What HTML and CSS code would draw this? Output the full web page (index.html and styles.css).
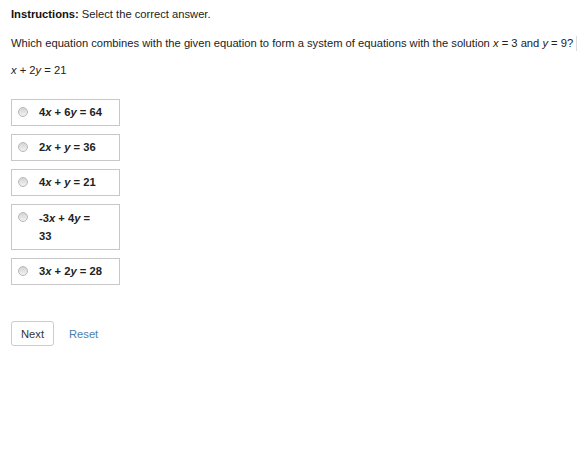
FILE: index.html
```html
<!DOCTYPE html>
<html>
<head>
<meta charset="utf-8">
<link rel="stylesheet" href="styles.css">
</head>
<body>
<div class="page">
  <p class="instructions"><b>Instructions:</b> Select the correct answer.</p>
  <p class="question">Which equation combines with the given equation to form a system of equations with the solution <i>x</i> = 3 and <i>y</i> = 9?<span class="caret"></span></p>
  <p class="given"><i>x</i> + 2<i>y</i> = 21</p>
  <div class="options">
    <label class="option"><span class="radio"></span><span class="eq">4<i>x</i> + 6<i>y</i> = 64</span></label>
    <label class="option"><span class="radio"></span><span class="eq">2<i>x</i> + <i>y</i> = 36</span></label>
    <label class="option"><span class="radio"></span><span class="eq">4<i>x</i> + <i>y</i> = 21</span></label>
    <label class="option tall"><span class="radio"></span><span class="eq">-3<i>x</i> + 4<i>y</i> =<br>33</span></label>
    <label class="option"><span class="radio"></span><span class="eq">3<i>x</i> + 2<i>y</i> = 28</span></label>
  </div>
  <div class="actions">
    <button class="btn-next">Next</button>
    <a class="btn-reset">Reset</a>
  </div>
</div>
</body>
</html>
```
FILE: styles.css
```css
html, body {
  margin: 0;
  padding: 0;
  background: #ffffff;
}
body {
  font-family: "Liberation Sans", Arial, sans-serif;
  font-size: 11.2px;
  color: #222222;
}
.page {
  padding: 7px 11px 0 11px;
}
p {
  margin: 0;
  line-height: 15px;
  white-space: nowrap;
}
.instructions {
  margin-bottom: 14px;
}
.instructions b {
  color: #111;
}
.question {
  margin-bottom: 12px;
}
.caret {
  display: inline-block;
  width: 1px;
  height: 15px;
  background: #dcdcdc;
  vertical-align: top;
  margin-left: 3px;
}
.given {
  margin-bottom: 21px;
}
.options {
  display: flex;
  flex-direction: column;
  gap: 8px;
  align-items: flex-start;
}
.option {
  display: flex;
  align-items: flex-start;
  box-sizing: border-box;
  width: 109px;
  height: 27px;
  border: 1px solid #c8c8c8;
  padding: 5px 6px 0 6px;
  white-space: nowrap;
}
.option.tall {
  height: 46px;
}
.radio {
  flex: none;
  box-sizing: border-box;
  width: 10px;
  height: 10px;
  border-radius: 50%;
  border: 1px solid #b8b8b8;
  background: linear-gradient(#d4d4d4, #f2f2f2);
  margin-top: 2px;
  margin-right: 11px;
}
.eq {
  font-weight: bold;
  line-height: 15px;
  color: #222;
}
.tall .eq {
  line-height: 18px;
  margin-top: -1px;
}
.actions {
  display: flex;
  align-items: center;
  gap: 15px;
  margin-top: 36px;
}
.btn-next {
  font-family: "Liberation Sans", Arial, sans-serif;
  font-size: 11.2px;
  color: #333;
  background: #fff;
  border: 1px solid #cccccc;
  border-radius: 3px;
  padding: 0;
  width: 43px;
  height: 25px;
}
.btn-reset {
  color: #4a7fae;
  font-size: 11.2px;
}
```
